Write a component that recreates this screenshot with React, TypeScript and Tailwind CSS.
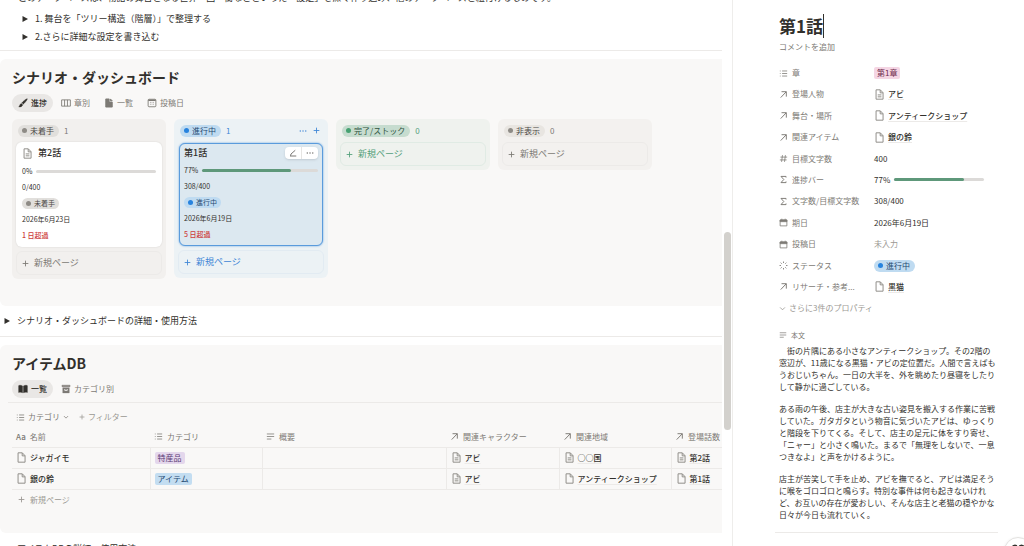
import type { ReactNode } from 'react';
import { clsx } from 'clsx';

const iconPaths: Record<string, ReactNode> = {
  list: <path d="M1.5 3.5h1.4M1.5 8h1.4M1.5 12.5h1.4M5.5 3.5h9M5.5 8h9M5.5 12.5h9" />,
  text: <path d="M1.5 3.5h13M1.5 8h13M1.5 12.5h8" />,
  arrow: <path d="M3 13.5 12.8 3.2M4.5 3h8.5v8.8" strokeWidth="1.7" />,
  hash: <path d="M6.2 2 4.6 14M11.4 2 9.8 14M2.5 5.5h12M1.5 10.5h12" />,
  sum: <path d="M12.5 4.5v-2h-9L8.5 8l-5 5.5h9v-2" strokeWidth="1.7" />,
  calendar: (
    <>
      <path d="M2 3.5h12v10.5H2zM5 1.2v2M11 1.2v2" />
      <path d="M2 3.5h12v3H2z" fill="currentColor" />
    </>
  ),
  calendarOutline: (
    <>
      <rect x="1.8" y="2" width="12.4" height="12" rx="1.5" />
      <path d="M2 3.4h12" strokeWidth="2.4" />
      <path d="M4.8 7h6.4M4.8 10h6.4" strokeWidth="1" strokeDasharray="1.4 1.1" />
    </>
  ),
  burst: <path d="M8 1v2.4M8 12.6V15M1 8h2.4M12.6 8H15M3 3l1.7 1.7M11.3 11.3 13 13M3 13l1.7-1.7M11.3 4.7 13 3" strokeWidth="1.7" />,
  page: <path d="M3 1.2h6.2l4 4.2v9.4H3zM9 1.4v4.2h4" />,
  pageText: <path d="M3 1.2h6.2l4 4.2v9.4H3zM9 1.4v4.2h4M5.4 8.6h5.4M5.4 11.4h5.4" />,
  pageSolid: (
    <>
      <path d="M2.8 1.5h5.4v5h5v8H2.8z" fill="currentColor" />
      <path d="M10.2 1.5v3h3z" fill="currentColor" />
    </>
  ),
  columns: <path d="M1 3h14v10H1zM5.7 3v10M10.3 3v10" />,
  brush: (
    <>
      <path d="M14.8 1.2c.9.9-4.6 7.4-6.3 8.6L6.3 7.6C7.5 5.9 13.9.3 14.8 1.2z" fill="currentColor" strokeWidth="0.6" />
      <path d="M5.4 8.6l2 2c.1 2.6-3.2 4-6.2 3.6 1.7-.8 1.1-4.8 4.2-5.6z" fill="currentColor" strokeWidth="0.6" />
    </>
  ),
  book: (
    <path
      d="M1 2.600c2.300-.9 4.600-.6 6.300.5v10.800c-1.700-1-4-1.200-6.300-.4zM15 2.600c-2.300-.9-4.600-.6-6.300.5v10.800c1.700-1 4-1.200 6.300-.4z"
      fill="currentColor"
      strokeWidth="0.6"
    />
  ),
  archive: (
    <>
      <path d="M1.5 1.8h13v2.4h-13z" fill="currentColor" strokeWidth="0.6" />
      <path d="M2.8 5.8h10.4v8.4H2.8z" fill="currentColor" strokeWidth="0.6" />
      <path d="M6 8.2v2h4v-2" stroke="#f9f8f7" />
    </>
  ),
  plus: <path d="M8 1.5v13M1.500 8h13" strokeWidth="2" />,
  dots: <path d="M2.5 8h.1M8 8h.1M13.5 8h.1" strokeWidth="2.6" strokeLinecap="round" />,
  edit: <path d="M2 14h12.5M3 13.5l1-3.500 8.500-7.500" strokeWidth="1.8" />,
  chevron: <path d="M2.5 5.5 8 11l5.500-5.500" strokeWidth="1.9" />,
  face: (
    <>
      <path d="M1 6c1-4 5-4 6-1M9 5c1-3 5-3 6 0" strokeWidth="2" />
      <path d="M4 10h.1M12 10h.1" strokeWidth="2.5" strokeLinecap="round" />
    </>
  ),
};

function Icon({ name, className = 'size-[10px]' }: { name: string; className?: string }) {
  return (
    <svg
      viewBox="0 0 16 16"
      fill="none"
      stroke="currentColor"
      strokeWidth="1.4"
      strokeLinejoin="round"
      aria-hidden="true"
      className={clsx('shrink-0', className)}
    >
      {iconPaths[name]}
    </svg>
  );
}

const pillTones = {
  gray: { pill: 'bg-[#e1dfdc] text-[#4b4945]', dot: 'bg-[#8e8b86]' },
  light: { pill: 'bg-[#e8e5e1] text-[#4b4945]', dot: 'bg-[#8e8b86]' },
  blue: { pill: 'bg-[#bfdbf1] text-[#264a72]', dot: 'bg-[#2783de]' },
  green: { pill: 'bg-[#c6dccf] text-[#2f5340]', dot: 'bg-[#46a171]' },
};

type Tone = keyof typeof pillTones;

function StatusPill({ tone, small, children }: { tone: Tone; small?: boolean; children: ReactNode }) {
  return (
    <span
      className={clsx(
        'flex items-center gap-[3px] rounded-full whitespace-nowrap',
        small ? 'h-[11px] px-1 text-[7px]' : 'h-3 pr-[5px] pl-1 text-[8px]',
        pillTones[tone].pill,
      )}
    >
      <span className={clsx('size-[5px] rounded-full', pillTones[tone].dot)} />
      {children}
    </span>
  );
}

function Progress({ value, className }: { value: number; className?: string }) {
  return (
    <div className={clsx('h-[3px] rounded-full bg-[#dcdad8]', className)}>
      <div className="h-full rounded-full bg-[#5e987a]" style={{ width: `${value}%` }} />
    </div>
  );
}

function Toggle({ children, className }: { children: ReactNode; className?: string }) {
  return (
    <button type="button" className={clsx('flex items-center text-left text-[9px]', className)}>
      <svg viewBox="0 0 6 6" className="size-[6px] shrink-0" aria-hidden="true">
        <path d="M.5 0 6 3 .5 6z" fill="#32302c" />
      </svg>
      <span className="ml-[7px]">{children}</span>
    </button>
  );
}

function Tab({ icon, active, children }: { icon: string; active?: boolean; children: ReactNode }) {
  return (
    <button
      type="button"
      className={clsx(
        'flex h-[18px] items-center gap-[3px] rounded-full px-[6px] text-[8px]',
        active ? 'bg-[#e9e7e5] font-medium text-[#32302c]' : 'text-[#7d7a75]',
      )}
    >
      <Icon name={icon} className="size-[10px]" />
      {children}
    </button>
  );
}

const columnTones = {
  gray: { bg: 'bg-[#f2f0ee]', text: 'text-[#7d7a75]', border: 'border-[#eceae8]' },
  light: { bg: 'bg-[#f3f1ef]', text: 'text-[#7d7a75]', border: 'border-[#eceae8]' },
  blue: { bg: 'bg-[#ecf2f5]', text: 'text-[#3f86d6]', border: 'border-[#e2ebf2]' },
  green: { bg: 'bg-[#eff2ee]', text: 'text-[#55a07c]', border: 'border-[#e0ebe4]' },
};

function Column({ tone, name, count, actions, children }: { tone: Tone; name: string; count: number; actions?: boolean; children?: ReactNode }) {
  const t = columnTones[tone];
  return (
    <section className={clsx('flex w-[154px] shrink-0 flex-col rounded-md px-1 pb-1', t.bg)}>
      <header className={clsx('flex h-[23px] items-center px-[2px] text-[8px]', t.text)}>
        <StatusPill tone={tone}>{name}</StatusPill>
        <span className="ml-[5px]">{count}</span>
        {actions && (
          <span className="ml-auto flex gap-[6px] pr-[2px]">
            <button type="button" aria-label="その他"><Icon name="dots" className="size-2" /></button>
            <button type="button" aria-label="追加"><Icon name="plus" className="size-[7px]" /></button>
          </span>
        )}
      </header>
      {children}
      <button type="button" className={clsx('flex h-6 items-center gap-[5px] rounded-md border px-[5px] text-[9px]', t.text, t.border)}>
        <Icon name="plus" className="size-[7px]" />
        新規ページ
      </button>
    </section>
  );
}

type CardProps = { title: string; percent: number; words: string; tone: Tone; status: string; date: string; late: string; selected?: boolean };

function Card({ title, percent, words, tone, status, date, late, selected }: CardProps) {
  return (
    <article
      className={clsx(
        'mb-1 flex flex-col rounded-md text-[7px] leading-4',
        selected
          ? 'mx-px mt-px border border-[#5a9bdc] bg-[#dce8f0] px-1 pb-[3px] shadow-[0_0_2px_#5a9bdc]'
          : 'bg-white px-[6px] pt-px pb-1 shadow-[0_0_2px_rgba(0,0,0,0.12)]',
      )}
    >
      <div className={clsx('flex items-center gap-[5px] text-[9px] font-medium', selected ? 'h-[18px]' : 'h-5')}>
        {!selected && <Icon name="pageText" className="size-[11px] text-[#8e8b86]" />}
        <h3>{title}</h3>
        {selected && (
          <div className="ml-auto flex h-3 divide-x divide-[#e6e5e3] rounded-sm bg-white text-[#6b6965] shadow-sm">
            <button type="button" aria-label="編集" className="px-1"><Icon name="edit" className="size-2" /></button>
            <button type="button" aria-label="メニュー" className="px-1"><Icon name="dots" className="size-2" /></button>
          </div>
        )}
      </div>
      <div className="flex h-4 items-center gap-1">
        {percent}%
        <Progress value={percent} className="flex-1" />
      </div>
      <p>{words}</p>
      <div className="flex h-4 items-center"><StatusPill tone={tone} small>{status}</StatusPill></div>
      <p>{date}</p>
      <p className="font-medium text-[#cd3c3a]">{late}</p>
    </article>
  );
}

function PageLink({ icon = 'page', children }: { icon?: string; children: ReactNode }) {
  return (
    <a href="#" className="flex items-center gap-[3px] font-medium whitespace-nowrap">
      <Icon name={icon} className="size-[11px] text-[#8e8b86]" />
      <span className="underline decoration-[#eceae8] decoration-1 underline-offset-2">{children}</span>
    </a>
  );
}

const tableColumns = [
  { icon: 'Aa', label: '名前', width: 'w-[138px]' },
  { icon: 'list', label: 'カテゴリ', width: 'w-[112px]' },
  { icon: 'text', label: '概要', width: 'w-[184px]' },
  { icon: 'arrow', label: '関連キャラクター', width: 'w-[113px]' },
  { icon: 'arrow', label: '関連地域', width: 'w-[112px]' },
  { icon: 'arrow', label: '登場話数', width: 'w-[112px]' },
];

const items = [
  { name: 'ジャガイモ', tag: '特産品', tagClass: 'bg-[#e4d7ec] text-[#5b3a74]', area: '○○国', areaIcon: 'pageText', story: '第2話', storyIcon: 'pageText' },
  { name: '銀の鈴', tag: 'アイテム', tagClass: 'bg-[#c3ddf1] text-[#264a72]', area: 'アンティークショップ', areaIcon: 'page', story: '第1話', storyIcon: 'page' },
];

function ItemTable() {
  return (
    <table className="w-[771px] table-fixed border-collapse text-[8px]">
      <thead>
        <tr className="h-5 border-b border-[#eceae8] text-left text-[#7d7a75]">
          {tableColumns.map((c) => (
            <th key={c.label} className={clsx('p-0 pl-1 font-normal', c.width)}>
              <span className="flex items-center gap-1">
                {c.icon === 'Aa' ? <span className="font-medium">Aa</span> : <Icon name={c.icon} className="size-[9px]" />}
                {c.label}
              </span>
            </th>
          ))}
        </tr>
      </thead>
      <tbody>
        {items.map((item) => (
          <tr key={item.name} className="h-[21px] divide-x divide-[#eceae8] border-b border-[#eceae8] *:p-0 *:pl-1">
            <td>
              <a href="#" className="flex items-center gap-[3px] font-medium">
                <Icon name="page" className="size-[11px] text-[#8e8b86]" />
                {item.name}
              </a>
            </td>
            <td>
              <span className={clsx('block w-fit rounded-xs px-[3px] leading-3', item.tagClass)}>{item.tag}</span>
            </td>
            <td />
            <td><PageLink icon="pageText">アビ</PageLink></td>
            <td><PageLink icon={item.areaIcon}>{item.area}</PageLink></td>
            <td><PageLink icon={item.storyIcon}>{item.story}</PageLink></td>
          </tr>
        ))}
      </tbody>
    </table>
  );
}

const properties: { icon: string; label: string; value: ReactNode }[] = [
  { icon: 'list', label: '章', value: <span className="block rounded-xs bg-[#f5d6e4] px-[3px] leading-3 text-[#6e2b4c]">第1章</span> },
  { icon: 'arrow', label: '登場人物', value: <PageLink icon="pageText">アビ</PageLink> },
  { icon: 'arrow', label: '舞台・場所', value: <PageLink>アンティークショップ</PageLink> },
  { icon: 'arrow', label: '関連アイテム', value: <PageLink>銀の鈴</PageLink> },
  { icon: 'hash', label: '目標文字数', value: '400' },
  { icon: 'sum', label: '進捗バー', value: <span className="flex items-center gap-1">77%<Progress value={77} className="w-[90px]" /></span> },
  { icon: 'sum', label: '文字数/目標文字数', value: '308/400' },
  { icon: 'calendar', label: '期日', value: '2026年6月19日' },
  { icon: 'calendar', label: '投稿日', value: <span className="text-[#9b9893]">未入力</span> },
  { icon: 'burst', label: 'ステータス', value: <StatusPill tone="blue">進行中</StatusPill> },
  { icon: 'arrow', label: 'リサーチ・参考...', value: <PageLink>黒猫</PageLink> },
];

function PagePeek() {
  return (
    <aside className="w-[292px] shrink-0 overflow-hidden border-l border-[#eeedeb] bg-white pt-[14px] pr-[26px] pl-[46px] text-[8px]">
      <h1 className="flex h-6 items-center text-[17px] leading-6 font-bold">
        第1話
        <span className="h-6 w-px bg-[#32302c]" />
      </h1>
      <button type="button" className="mt-[3px] block h-3 leading-3 text-[#7d7a75]">コメントを追加</button>
      <dl className="mt-[10px] flex h-[234px] flex-col justify-between">
        {properties.map((p) => (
          <div key={p.label} className="flex h-5 items-center">
            <dt className="flex w-[95px] items-center gap-1 text-[#7d7a75]">
              <Icon name={p.icon} className="size-[9px]" />
              {p.label}
            </dt>
            <dd>{p.value}</dd>
          </div>
        ))}
      </dl>
      <button type="button" className="mt-[3px] flex h-4 items-center gap-[3px] text-[#9b9893]">
        <Icon name="chevron" className="size-[7px]" />
        さらに3件のプロパティ
      </button>
      <h2 className="mt-[11px] flex h-4 items-center gap-1 text-[7px] text-[#7d7a75]">
        <Icon name="text" className="size-2" />
        本文
      </h2>
      <div className="flex flex-col gap-[10px] pt-[2px] leading-3">
        <p>　街の片隅にある小さなアンティークショップ。その2階の窓辺が、11歳になる黒猫・アビの定位置だ。人間で言えばもうおじいちゃん。一日の大半を、外を眺めたり昼寝をしたりして静かに過ごしている。</p>
        <p>ある雨の午後、店主が大きな古い姿見を搬入する作業に苦戦していた。ガタガタという物音に気づいたアビは、ゆっくりと階段を下りてくる。そして、店主の足元に体をすり寄せ、「ニャー」と小さく鳴いた。まるで「無理をしないで、一息つきなよ」と声をかけるように。</p>
        <p>店主が苦笑して手を止め、アビを撫でると、アビは満足そうに喉をゴロゴロと鳴らす。特別な事件は何も起きないけれど、お互いの存在が愛おしい、そんな店主と老猫の穏やかな日々が今日も流れていく。</p>
      </div>
      <hr className="mt-[11px] -ml-1 border-[#eceae8]" />
    </aside>
  );
}

export default function App() {
  return (
    <div lang="ja" className="flex h-screen overflow-hidden bg-white font-['Noto_Sans_CJK_JP',sans-serif] text-[#32302c]">
      <main className="relative min-w-0 flex-1 overflow-hidden pr-[10px]">
        <p className="-mt-2 ml-[18px] h-[18px] text-[9px] leading-3 whitespace-nowrap">
          このデータベースは、物語の舞台となる世界・国・街などといった「設定」を深く作り込み、他のデータベースと紐付けるものです。
        </p>
        <div className="flex flex-col pl-[22px]">
          <Toggle className="h-[18px]">1. 舞台を「ツリー構造（階層）」で整理する</Toggle>
          <Toggle className="h-[18px]">2.さらに詳細な設定を書き込む</Toggle>
        </div>
        <hr className="mt-1 border-[#eceae8]" />

        <section className="mt-2 overflow-hidden rounded-l-md bg-[#f9f8f7] pt-2 pb-[27px] pl-3">
          <h2 className="text-[14px] leading-5 font-bold">シナリオ・ダッシュボード</h2>
          <nav className="mt-[7px] flex gap-[2px]">
            <Tab icon="brush" active>進捗</Tab>
            <Tab icon="columns">章別</Tab>
            <Tab icon="pageSolid">一覧</Tab>
            <Tab icon="calendarOutline">投稿日</Tab>
          </nav>
          <div className="mt-[7px] flex items-start gap-2">
            <Column tone="gray" name="未着手" count={1}>
              <Card title="第2話" percent={0} words="0/400" tone="gray" status="未着手" date="2026年6月23日" late="1 日超過" />
            </Column>
            <Column tone="blue" name="進行中" count={1} actions>
              <Card title="第1話" percent={77} words="308/400" tone="blue" status="進行中" date="2026年6月19日" late="5 日超過" selected />
            </Column>
            <Column tone="green" name="完了/ストック" count={0} />
            <Column tone="light" name="非表示" count={0} />
          </div>
        </section>

        <Toggle className="h-[30px] pl-1">シナリオ・ダッシュボードの詳細・使用方法</Toggle>
        <hr className="border-[#eceae8]" />

        <section className="mt-2 overflow-hidden rounded-l-md bg-[#f9f8f7] pt-2 pb-[23px] pl-3">
          <h2 className="text-[14px] leading-5 font-bold">アイテムDB</h2>
          <nav className="-ml-1 mt-[7px] flex gap-[2px] border-b border-[#eceae8] pb-1 pl-1">
            <Tab icon="book" active>一覧</Tab>
            <Tab icon="archive">カテゴリ別</Tab>
          </nav>
          <div className="flex h-6 items-center gap-[10px] pt-1 pl-1 text-[8px]">
            <button type="button" className="flex items-center gap-[3px] text-[#7d7a75]">
              <Icon name="list" className="size-[9px]" />
              カテゴリ
              <Icon name="chevron" className="size-[6px]" />
            </button>
            <button type="button" className="flex items-center gap-[3px] text-[#9b9893]">
              <Icon name="plus" className="size-[6px]" />
              フィルター
            </button>
          </div>
          <ItemTable />
          <button type="button" className="flex h-5 items-center gap-[5px] pl-[6px] text-[8px] text-[#9b9893]">
            <Icon name="plus" className="size-[7px]" />
            新規ページ
          </button>
        </section>
        <Toggle className="h-8 pl-1">アイテムDBの詳細・使用方法</Toggle>

        <div className="absolute top-[232px] right-px h-[198px] w-[7px] rounded-full bg-[#d3d1cd]" />
      </main>
      <PagePeek />
      <button type="button" aria-label="AI" className="fixed -right-2 -bottom-[19px] flex size-7 items-start justify-center rounded-full border border-[#e3e2e0] bg-white pt-[5px] shadow-sm">
        <Icon name="face" className="size-[14px]" />
      </button>
    </div>
  );
}
